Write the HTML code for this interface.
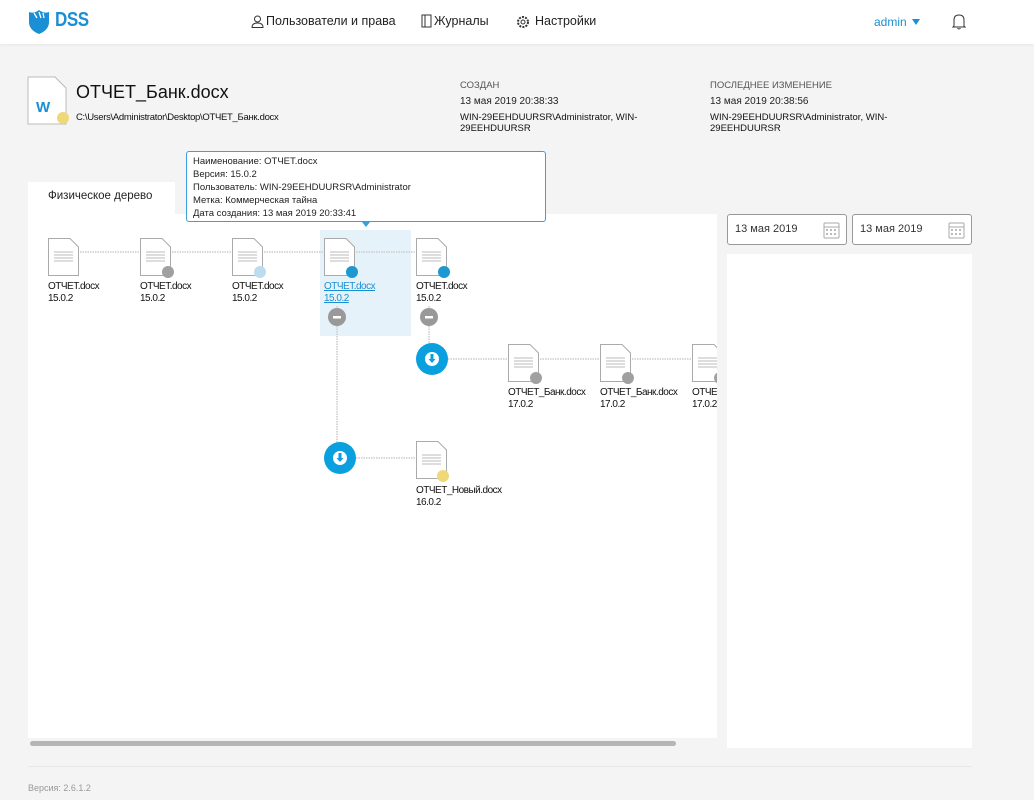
<!DOCTYPE html>
<html><head><meta charset="utf-8">
<style>
*{margin:0;padding:0;box-sizing:border-box}
body{width:1034px;height:800px;background:#f4f4f4;font-family:"Liberation Sans","DejaVu Sans",sans-serif;color:#222;position:relative;overflow:hidden}
.abs{position:absolute}
.hdr{left:0;top:0;width:1034px;height:44px;background:#fff;box-shadow:0 1px 3px rgba(0,0,0,.06)}
.nav{font-size:12.5px;color:#222;top:14px}
.lbl{font-size:10px;color:#111;line-height:12px;letter-spacing:-.5px}
.small{font-size:9.5px;line-height:11px;color:#111}
</style></head><body>
<div class="abs hdr"></div>
<svg class="abs" style="left:28px;top:9px" width="22" height="26" viewBox="0 0 22 26"><path d="M1 3 Q6 5 11 1 Q16 5 21 3 L21 13 Q21 21 11 25 Q1 21 1 13Z" fill="#1b8fd3"/><path d="M6 4 L9 9 M11 3 L13 9 M15 4 L16 9" stroke="#fff" stroke-width="1.3"/></svg>
<div class="abs" style="left:55px;top:9px;font-size:20px;font-weight:bold;color:#1b8fd3;letter-spacing:-.5px;transform:scaleX(.85);transform-origin:left">DSS</div>
<svg class="abs" style="left:251px;top:15px" width="13" height="13" viewBox="0 0 13 13"><circle cx="6.5" cy="4" r="3" fill="none" stroke="#333"/><path d="M1 12.5 Q1 8 6.5 8 Q12 8 12 12.5Z" fill="none" stroke="#333"/></svg>
<div class="abs nav" style="left:266px">Пользователи и права</div>
<svg class="abs" style="left:421px;top:14px" width="11" height="14" viewBox="0 0 11 14"><rect x="1" y="1" width="9" height="12" fill="none" stroke="#333"/><path d="M4 1V13" stroke="#333"/></svg>
<div class="abs nav" style="left:434px">Журналы</div>
<svg class="abs" style="left:516px;top:15px" width="14" height="14" viewBox="0 0 14 14"><circle cx="7" cy="7" r="5" fill="none" stroke="#333" stroke-dasharray="2 1.2" stroke-width="2"/><circle cx="7" cy="7" r="2" fill="none" stroke="#333"/></svg>
<div class="abs nav" style="left:535px">Настройки</div>
<div class="abs" style="left:874px;top:15px;font-size:12px;color:#1b8fd3">admin</div>
<div class="abs" style="left:912px;top:19px;width:0;height:0;border-left:4.5px solid transparent;border-right:4.5px solid transparent;border-top:6px solid #1b8fd3"></div>
<svg class="abs" style="left:952px;top:13px" width="14" height="17" viewBox="0 0 14 17"><path d="M2 13 L2 7 Q2 2 7 2 Q12 2 12 7 L12 13 L13 14 L1 14Z M5.5 15 Q7 17 8.5 15" fill="none" stroke="#333"/></svg>

<svg class="abs" style="left:27px;top:76px" width="44" height="50" viewBox="0 0 44 50"><path d="M1 1 L28 1 L39 12 L39 48 L1 48Z" fill="#fff" stroke="#bbb"/><text x="9" y="36" font-family="Liberation Sans" font-weight="bold" font-size="15" fill="#1b8fd3">W</text><circle cx="36" cy="42" r="6" fill="#f0d878"/></svg>
<div class="abs" style="left:76px;top:82px;font-size:18px;color:#111">ОТЧЕТ_Банк.docx</div>
<div class="abs small" style="left:76px;top:112px;letter-spacing:-.3px">C:\Users\Administrator\Desktop\ОТЧЕТ_Банк.docx</div>
<div class="abs" style="left:460px;top:80px;font-size:9.5px;color:#555">СОЗДАН</div>
<div class="abs" style="left:460px;top:96px;font-size:10px">13 мая 2019 20:38:33</div>
<div class="abs small" style="left:460px;top:112px;width:200px">WIN-29EEHDUURSR\Administrator, WIN-29EEHDUURSR</div>
<div class="abs" style="left:710px;top:80px;font-size:9.5px;color:#555">ПОСЛЕДНЕЕ ИЗМЕНЕНИЕ</div>
<div class="abs" style="left:710px;top:96px;font-size:10px">13 мая 2019 20:38:56</div>
<div class="abs small" style="left:710px;top:112px;width:200px">WIN-29EEHDUURSR\Administrator, WIN-29EEHDUURSR</div>

<div class="abs" style="left:28px;top:182px;width:147px;height:34px;background:#fff"></div>
<div class="abs" style="left:48px;top:190px;font-size:11.5px">Физическое дерево</div>
<div class="abs" style="left:28px;top:214px;width:689px;height:534px;background:#fff"></div>
<div class="abs" style="left:717px;top:214px;width:10px;height:520px;background:#f4f4f4"></div>
<div class="abs" style="left:28px;top:738px;width:699px;height:10px;background:#f4f4f4"></div>
<div class="abs" style="left:30px;top:741px;width:646px;height:5px;background:#b5b5b5;border-radius:3px"></div>
<div class="abs" style="left:727px;top:254px;width:245px;height:494px;background:#fff"></div>
<div class="abs" style="left:727px;top:214px;width:120px;height:31px;background:#fff;border:1px solid #999;border-radius:3px"></div>
<div class="abs" style="left:735px;top:223px;font-size:11px;color:#333">13 мая 2019</div>
<div class="abs" style="left:852px;top:214px;width:120px;height:31px;background:#fff;border:1px solid #999;border-radius:3px"></div>
<div class="abs" style="left:860px;top:223px;font-size:11px;color:#333">13 мая 2019</div>
<svg class="abs" style="left:823px;top:222px" width="17" height="17" viewBox="0 0 17 17"><rect x="1" y="1" width="15" height="15" rx="1" fill="none" stroke="#aaa"/><path d="M1 5H16" stroke="#aaa"/><g fill="#bbb"><rect x="3" y="7" width="2" height="2"/><rect x="7" y="7" width="2" height="2"/><rect x="11" y="7" width="2" height="2"/><rect x="3" y="11" width="2" height="2"/><rect x="7" y="11" width="2" height="2"/><rect x="11" y="11" width="2" height="2"/></g></svg>
<svg class="abs" style="left:948px;top:222px" width="17" height="17" viewBox="0 0 17 17"><rect x="1" y="1" width="15" height="15" rx="1" fill="none" stroke="#aaa"/><path d="M1 5H16" stroke="#aaa"/><g fill="#bbb"><rect x="3" y="7" width="2" height="2"/><rect x="7" y="7" width="2" height="2"/><rect x="11" y="7" width="2" height="2"/><rect x="3" y="11" width="2" height="2"/><rect x="7" y="11" width="2" height="2"/><rect x="11" y="11" width="2" height="2"/></g></svg>

<div class="abs" style="left:320px;top:230px;width:91px;height:106px;background:#e5f2fa"></div>

<svg class="abs" style="left:28px;top:214px" width="689" height="320" viewBox="28 214 689 320">
<defs>
<g id="d"><path d="M0.5 0.5 L22 0.5 L30.5 9 L30.5 37.5 L0.5 37.5Z" fill="#fff" stroke="#aaa"/><path d="M6 14H25M6 17H25M6 20H25M6 23H25" stroke="#bbb"/></g>
</defs>
<g stroke="#ccc" stroke-dasharray="1.5 1" stroke-width="1.5" fill="none">
<path d="M80 252H140M172 252H232M264 252H324M356 252H416"/>
<path d="M448 359H508M540 359H600M632 359H692"/>
<path d="M356 458H416"/>
<path d="M337 306V442M429 306V343"/>
</g>
<use href="#d" x="48" y="238"/><use href="#d" x="140" y="238"/><use href="#d" x="232" y="238"/><use href="#d" x="324" y="238"/><use href="#d" x="416" y="238"/>
<use href="#d" x="508" y="344"/><use href="#d" x="600" y="344"/><use href="#d" x="692" y="344"/>
<use href="#d" x="416" y="441"/>
<circle cx="168" cy="272" r="6" fill="#a0a0a0"/>
<circle cx="260" cy="272" r="6" fill="#bcdcf0"/>
<circle cx="352" cy="272" r="6" fill="#1e98d0"/>
<circle cx="444" cy="272" r="6" fill="#1e98d0"/>
<circle cx="536" cy="378" r="6" fill="#a0a0a0"/>
<circle cx="628" cy="378" r="6" fill="#a0a0a0"/>
<circle cx="720" cy="378" r="6" fill="#a0a0a0"/>
<circle cx="443" cy="476" r="6" fill="#f0d878"/>
<g><circle cx="337" cy="317" r="9" fill="#999"/><rect x="333" y="316" width="8" height="2.5" fill="#fff"/></g>
<g><circle cx="429" cy="317" r="9" fill="#999"/><rect x="425" y="316" width="8" height="2.5" fill="#fff"/></g>
<g><circle cx="432" cy="359" r="16" fill="#0aa0e0"/><circle cx="432" cy="359" r="7" fill="#fff"/><path d="M430.5 354V359H428.5L432 363L435.5 359H433.5V354Z" fill="#0aa0e0"/></g>
<g><circle cx="340" cy="458" r="16" fill="#0aa0e0"/><circle cx="340" cy="458" r="7" fill="#fff"/><path d="M338.5 453V458H336.5L340 462L343.5 458H341.5V453Z" fill="#0aa0e0"/></g>
</svg>

<div class="abs lbl" style="left:48px;top:281px">ОТЧЕТ.docx<br>15.0.2</div>
<div class="abs lbl" style="left:140px;top:281px">ОТЧЕТ.docx<br>15.0.2</div>
<div class="abs lbl" style="left:232px;top:281px">ОТЧЕТ.docx<br>15.0.2</div>
<div class="abs lbl" style="left:324px;top:281px;color:#1b8fd3;text-decoration:underline">ОТЧЕТ.docx<br>15.0.2</div>
<div class="abs lbl" style="left:416px;top:281px">ОТЧЕТ.docx<br>15.0.2</div>
<div class="abs lbl" style="left:508px;top:387px">ОТЧЕТ_Банк.docx<br>17.0.2</div>
<div class="abs lbl" style="left:600px;top:387px">ОТЧЕТ_Банк.docx<br>17.0.2</div>
<div class="abs lbl" style="left:692px;top:387px;width:25px;overflow:hidden;white-space:nowrap">ОТЧЕТ_Банк.docx<br>17.0.2</div>
<div class="abs lbl" style="left:416px;top:485px">ОТЧЕТ_Новый.docx<br>16.0.2</div>

<div class="abs" style="left:186px;top:151px;width:360px;height:71px;background:#fff;border:1px solid #3aa0dc;border-radius:3px;padding:3px 0 0 6px;font-size:9.5px;line-height:13px;color:#222">Наименование: ОТЧЕТ.docx<br>Версия: 15.0.2<br>Пользователь: WIN-29EEHDUURSR\Administrator<br>Метка: Коммерческая тайна<br>Дата создания: 13 мая 2019 20:33:41</div>
<div class="abs" style="left:362px;top:222px;width:0;height:0;border-left:4px solid transparent;border-right:4px solid transparent;border-top:5px solid #3aa0dc"></div>

<div class="abs" style="left:28px;top:766px;width:944px;height:1px;background:#e8e8e8"></div>
<div class="abs" style="left:28px;top:783px;font-size:9px;color:#999">Версия: 2.6.1.2</div>
</body></html>
